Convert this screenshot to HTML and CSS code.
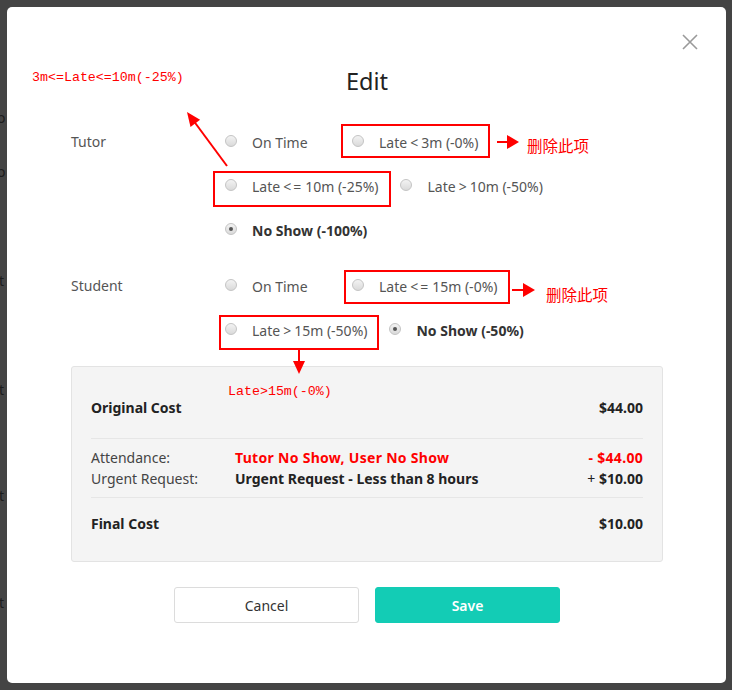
FILE: index.html
```html
<!DOCTYPE html>
<html lang="en">
<head>
<meta charset="utf-8">
<title>Edit</title>
<link rel="stylesheet" href="styles.css">
</head>
<body>
<div class="backdrop-text">
  <span class="frag frag-o1">o</span>
  <span class="frag frag-o2">o</span>
  <span class="frag frag-t1">t</span>
  <span class="frag frag-t2">t</span>
  <span class="frag frag-t3">t</span>
  <span class="frag frag-t4">t</span>
</div>

<div class="modal">
  <button class="close" aria-label="Close">
    <svg width="16" height="16" viewBox="0 0 16 16"><path d="M1 1L15 15M15 1L1 15" stroke="#9a9a9a" stroke-width="1.6" fill="none"/></svg>
  </button>
  <h1 class="title">Edit</h1>

  <div class="form">
    <div class="group">
      <div class="label">Tutor</div>
      <div class="options">
        <label class="opt"><span class="radio"></span><span>On Time</span></label>
        <label class="opt"><span class="radio"></span><span>Late<span class="op">&lt;</span>3m (-0%)</span></label>
        <label class="opt"><span class="radio"></span><span>Late<span class="op op2">&lt;=</span>10m (-25%)</span></label>
        <label class="opt"><span class="radio"></span><span>Late<span class="op">&gt;</span>10m (-50%)</span></label>
        <label class="opt opt-checked"><span class="radio checked"></span><span>No Show (-100%)</span></label>
      </div>
    </div>
    <div class="group group-student">
      <div class="label">Student</div>
      <div class="options">
        <label class="opt"><span class="radio"></span><span>On Time</span></label>
        <label class="opt"><span class="radio"></span><span>Late<span class="op op2">&lt;=</span>15m (-0%)</span></label>
        <label class="opt"><span class="radio"></span><span>Late<span class="op">&gt;</span>15m (-50%)</span></label>
        <label class="opt opt-checked"><span class="radio checked"></span><span>No Show (-50%)</span></label>
      </div>
    </div>
  </div>

  <div class="cost">
    <div class="cost-sec sec-original">
      <div class="row">
        <span class="strong">Original Cost</span>
        <span></span>
        <span class="strong amount">$44.00</span>
      </div>
    </div>
    <div class="cost-sec sec-detail">
      <div class="row">
        <span class="muted">Attendance:</span>
        <span class="strong red">Tutor No Show, User No Show</span>
        <span class="strong red amount">- $44.00</span>
      </div>
      <div class="row">
        <span class="muted">Urgent Request:</span>
        <span class="strong">Urgent Request - Less than 8 hours</span>
        <span class="amount"><span class="plus">+</span> <span class="strong">$10.00</span></span>
      </div>
    </div>
    <div class="cost-sec sec-final">
      <div class="row">
        <span class="strong">Final Cost</span>
        <span></span>
        <span class="strong amount">$10.00</span>
      </div>
    </div>
  </div>

  <div class="actions">
    <button class="btn btn-cancel">Cancel</button>
    <button class="btn btn-save">Save</button>
  </div>
</div>

<div class="annot">
  <svg class="annot-svg" width="732" height="690" viewBox="0 0 732 690">
    <g fill="none" stroke="#f00" stroke-width="2">
      <rect x="342" y="125" width="147" height="32"/>
      <rect x="214" y="172" width="176" height="34"/>
      <rect x="345" y="271" width="164" height="32"/>
      <rect x="220" y="316" width="158" height="33"/>
      <line x1="497" y1="142" x2="509" y2="142"/>
      <line x1="512" y1="290" x2="524" y2="290"/>
      <line x1="227" y1="166" x2="193" y2="120"/>
      <line x1="299" y1="350" x2="299" y2="363"/>
    </g>
    <g fill="#f00">
      <polygon points="507,135 519,142 507,149"/>
      <polygon points="523,283 535,290 523,297"/>
      <polygon points="187,112 190.5,126.9 200.1,119.7"/>
      <polygon points="293,361 305,361 299,374"/>
    </g>
  </svg>
  <div class="note note-range">3m&lt;=Late&lt;=10m(-25%)</div>
  <div class="note-cn note-del1">删除此项</div>
  <div class="note-cn note-del2">删除此项</div>
  <div class="note note-late">Late&gt;15m(-0%)</div>
</div>
</body>
</html>
```

FILE: styles.css
```css
* { box-sizing: border-box; }

html, body {
  margin: 0;
  padding: 0;
}

body {
  width: 732px;
  height: 690px;
  background: #444444;
  font-family: "Noto Sans", "Noto Sans CJK SC", sans-serif;
  font-size: 14px;
  color: #333;
  overflow: hidden;
  position: relative;
}

.backdrop-text .frag {
  position: absolute;
  font-size: 14px;
  line-height: 20px;
  color: #1c1c1c;
}
.frag-o1 { left: -3px; top: 108px; }
.frag-o2 { left: -3px; top: 162px; }
.frag-t1 { left: -1px; top: 271px; }
.frag-t2 { left: -1px; top: 380px; }
.frag-t3 { left: -1px; top: 486px; }
.frag-t4 { left: -1px; top: 593px; }

.modal {
  position: relative;
  margin: 7px 0 0 7px;
  width: 719px;
  height: 676px;
  background: #fff;
  border-radius: 5px;
  padding: 58px 63px 0 64px;
}

.close {
  position: absolute;
  top: 27px;
  right: 28px;
  width: 16px;
  height: 16px;
  padding: 0;
  border: 0;
  background: none;
  display: block;
}
.close svg { display: block; }

.title {
  margin: 0;
  text-align: center;
  font-size: 23.5px;
  line-height: 32px;
  font-weight: 400;
  color: #222;
}

.form {
  margin-top: 23px;
}

.group {
  display: flex;
}
.group-student {
  margin-top: 12px;
}

.label {
  width: 154px;
  flex: none;
  line-height: 44px;
  color: #555;
}

.options {
  width: 420px;
  display: flex;
  flex-wrap: wrap;
}

.opt {
  display: flex;
  align-items: center;
  height: 44px;
  min-width: 105px;
  margin-right: 22px;
  color: #555;
  white-space: nowrap;
}
.opt-checked {
  font-weight: 700;
  color: #333;
}

.op {
  padding: 0 3px;
}
.op2 {
  letter-spacing: 2px;
  padding: 0 2px 0 3px;
}

.radio {
  width: 12px;
  height: 12px;
  border-radius: 50%;
  border: 1px solid #c4c4c4;
  background: linear-gradient(#f3f3f3, #dadada);
  margin-right: 15px;
  margin-top: -2px;
  flex: none;
  position: relative;
}
.radio.checked::after {
  content: "";
  position: absolute;
  left: 3px;
  top: 3px;
  width: 4px;
  height: 4px;
  border-radius: 50%;
  background: #555;
}

.cost {
  margin-top: 14px;
  background: #f4f4f4;
  border: 1px solid #e3e3e3;
  border-radius: 3px;
  padding: 0 19px;
}

.cost-sec .row {
  display: grid;
  grid-template-columns: 144px 1fr auto;
  line-height: 20px;
  color: #222;
}

.sec-original {
  padding: 31px 0 20px;
  border-bottom: 1px solid #e6e6e6;
}
.sec-detail {
  padding: 8px 0;
  border-bottom: 1px solid #e6e6e6;
}
.sec-detail .row {
  line-height: 21px;
}
.sec-final {
  padding: 16px 0 27px;
}

.strong { font-weight: 700; }
.red.strong { letter-spacing: 0.3px; }
.muted { color: #444; }
.red { color: #ff0000; }
.amount { text-align: right; }
.plus { font-weight: 400; }

.actions {
  margin-top: 25px;
  display: flex;
  justify-content: center;
  gap: 16px;
}

.btn {
  width: 185px;
  height: 36px;
  border-radius: 3px;
  font-family: "Noto Sans", sans-serif;
  font-size: 14px;
  cursor: pointer;
}
.btn-cancel {
  background: #fff;
  border: 1px solid #dcdcdc;
  color: #333;
}
.btn-save {
  background: #13ccb5;
  border: 1px solid #13ccb5;
  color: #fff;
  font-weight: 600;
}

.annot-svg {
  position: absolute;
  left: 0;
  top: 0;
  pointer-events: none;
}
.note {
  position: absolute;
  font-family: "Liberation Mono", monospace;
  font-size: 13.3px;
  line-height: 16px;
  color: #ff0000;
  white-space: nowrap;
}
.note-range { left: 32px; top: 70px; }
.note-late { left: 228px; top: 384px; }

.note-cn {
  position: absolute;
  font-family: "Noto Sans CJK SC", sans-serif;
  font-size: 15.5px;
  line-height: 20px;
  color: #ff0000;
  white-space: nowrap;
}
.note-del1 { left: 527px; top: 135px; }
.note-del2 { left: 546px; top: 284px; }
```
